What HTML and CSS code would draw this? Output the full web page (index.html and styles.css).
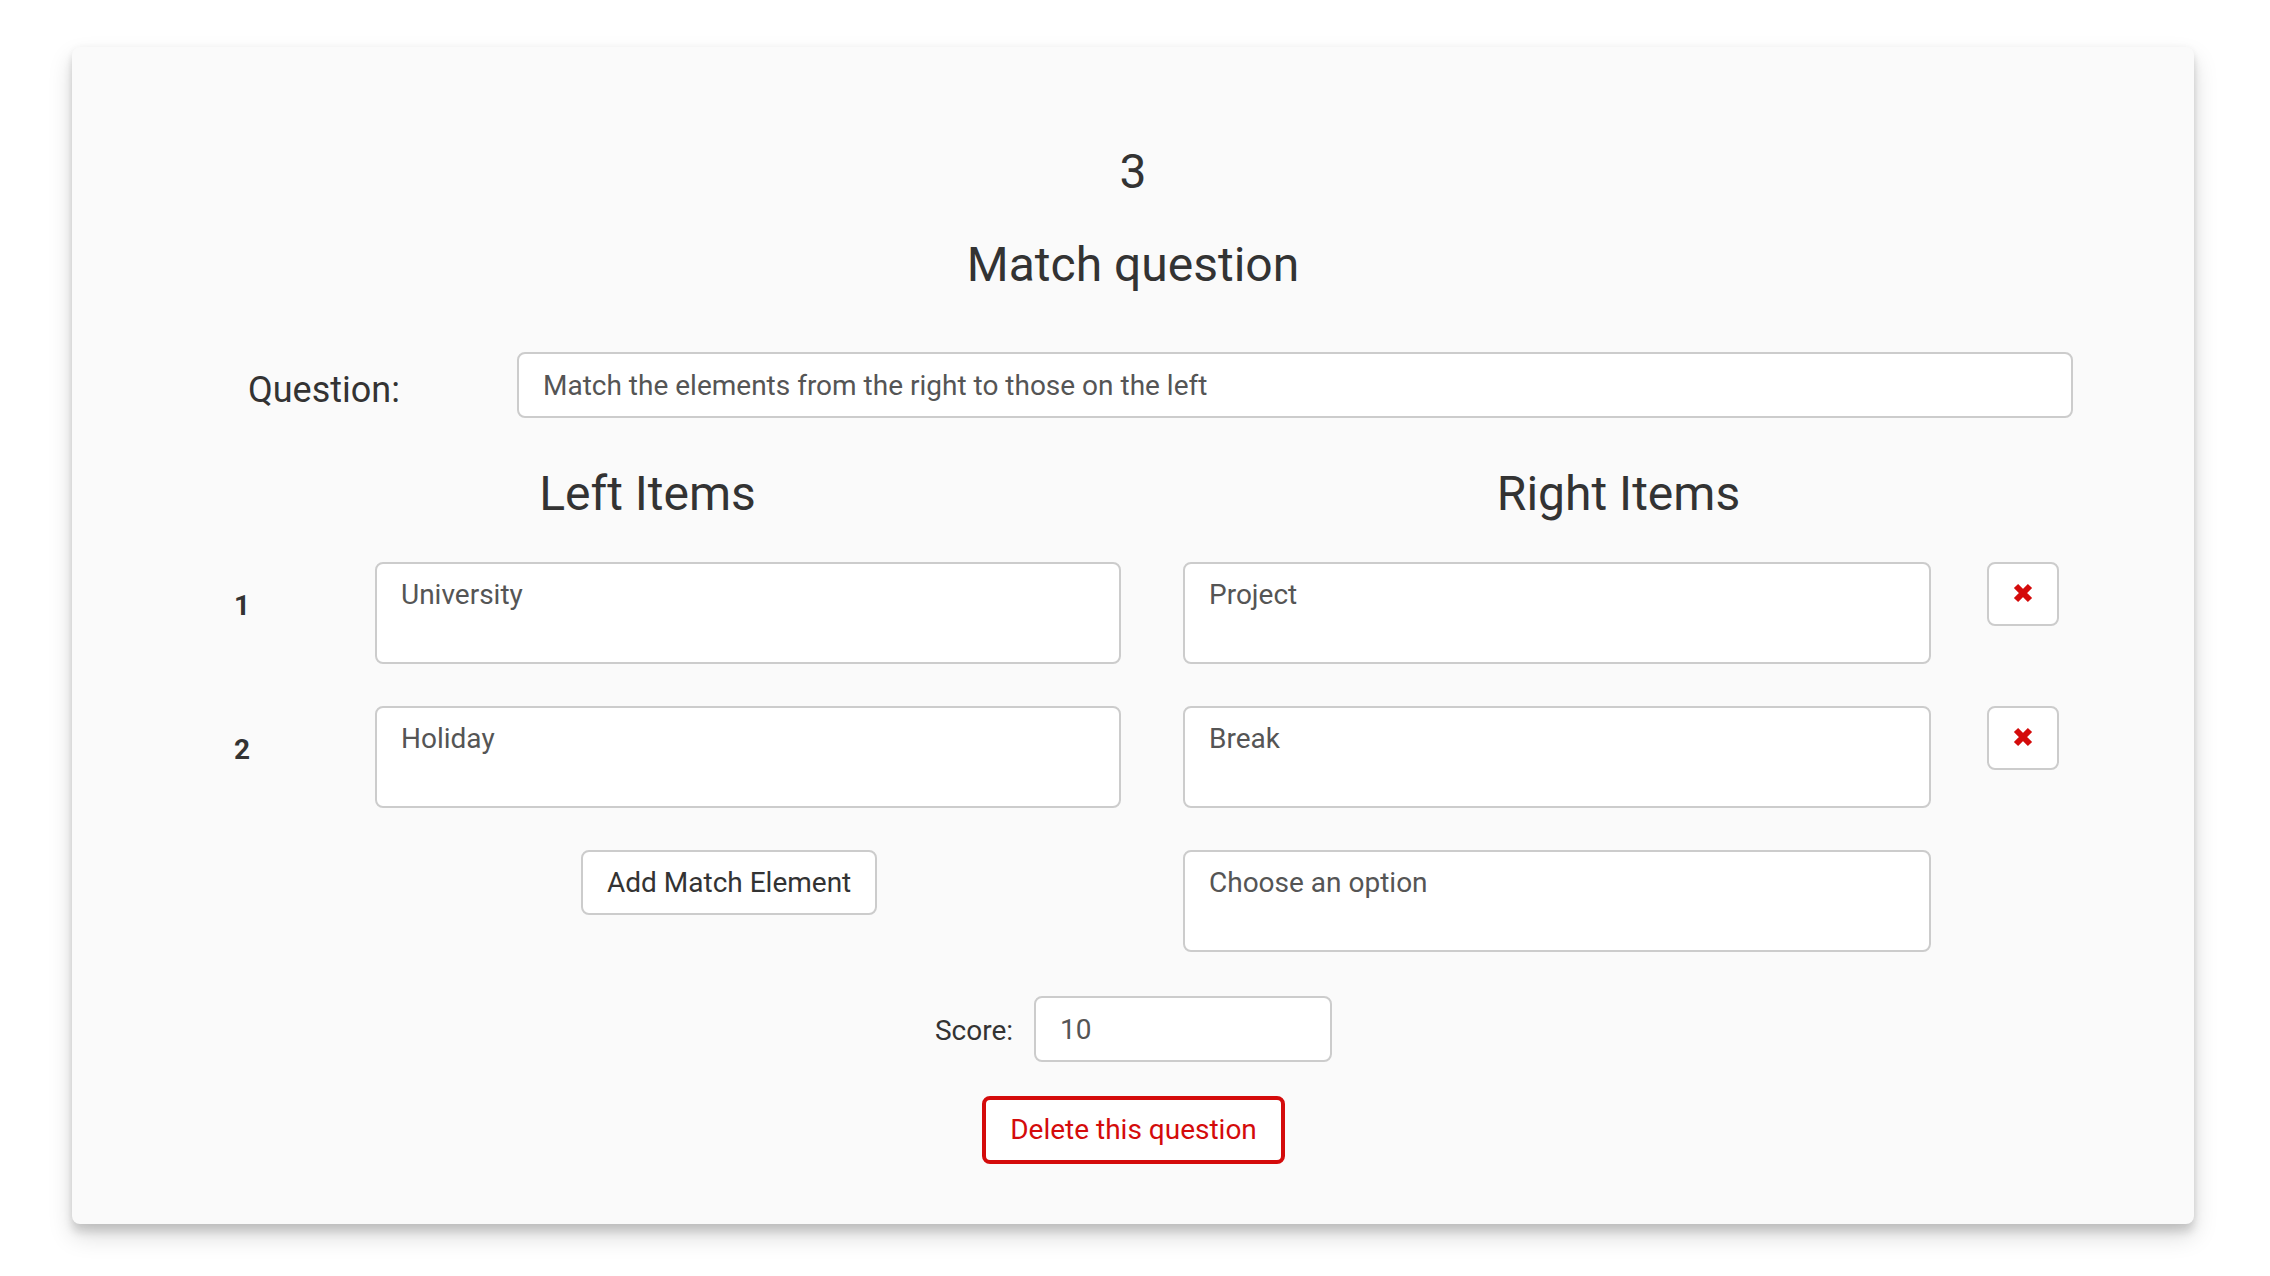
FILE: index.html
```html
<!DOCTYPE html>
<html lang="en">
<head>
<meta charset="utf-8">
<title>Match question</title>
<link rel="stylesheet" href="styles.css">
</head>
<body>
<div class="page">
<div class="card">
  <h3 class="title">3</h3>
  <h3 class="title title-second">Match question</h3>

  <div class="question-row">
    <label class="question-label">Question:</label>
    <input class="field question-input" type="text" value="Match the elements from the right to those on the left">
  </div>

  <div class="headers">
    <h3 class="col-head">Left Items</h3>
    <h3 class="col-head">Right Items</h3>
  </div>

  <div class="pairs">
    <div class="pair">
      <div class="num">1</div>
      <div class="field box left-box">University</div>
      <div class="field box right-box">Project</div>
      <button class="remove-btn" type="button" aria-label="Remove">
        <svg width="22" height="22" viewBox="0 0 22 22"><path d="M4 4 L18 18 M18 4 L4 18" stroke="#d40b0b" stroke-width="6" stroke-linecap="butt" fill="none"/></svg>
      </button>
    </div>
    <div class="pair">
      <div class="num">2</div>
      <div class="field box left-box">Holiday</div>
      <div class="field box right-box">Break</div>
      <button class="remove-btn" type="button" aria-label="Remove">
        <svg width="22" height="22" viewBox="0 0 22 22"><path d="M4 4 L18 18 M18 4 L4 18" stroke="#d40b0b" stroke-width="6" stroke-linecap="butt" fill="none"/></svg>
      </button>
    </div>
    <div class="pair">
      <div class="num"></div>
      <div class="add-cell"><button class="btn add-btn" type="button">Add Match Element</button></div>
      <div class="field box right-box">Choose an option</div>
    </div>
  </div>

  <div class="score-row">
    <label class="score-label">Score:</label>
    <input class="field score-input" type="text" value="10">
  </div>

  <div class="delete-row">
    <button class="btn delete-btn" type="button">Delete this question</button>
  </div>
</div>
</div>
</body>
</html>
```

FILE: styles.css
```css
html, body {
  margin: 0;
  padding: 0;
  background: #ffffff;
}

body {
  font-family: Roboto, "Liberation Sans", Arial, sans-serif;
  color: #333333;
}

.page {
  box-sizing: border-box;
  height: 1276px;
  padding: 47px 0 0 72px;
  overflow: hidden;
}

.card {
  width: 2122px;
  height: 1177px;
  box-sizing: border-box;
  padding: 97px 89px 0 90px;
  background: #fafafa;
  border-radius: 8px;
  box-shadow: 0 12px 24px rgba(0, 0, 0, 0.15), 0 8px 8px rgba(0, 0, 0, 0.13), 0 0 6px rgba(0, 0, 0, 0.04);
  display: flex;
  flex-direction: column;
}

.title {
  margin: 0;
  font-size: 48px;
  line-height: 56px;
  font-weight: 400;
  text-align: center;
  color: #333333;
  margin-left: -90px;
  margin-right: -89px;
}

.title-second {
  margin-top: 37px;
}

.field {
  box-sizing: border-box;
  background: #ffffff;
  border: 2px solid #cccccc;
  border-radius: 8px;
  font-family: Roboto, "Liberation Sans", Arial, sans-serif;
  font-size: 28px;
  line-height: 40px;
  color: #555555;
  padding: 11px 24px;
  margin: 0;
  outline: none;
}

.question-row {
  display: flex;
  align-items: flex-start;
  margin-top: 59px;
}

.question-label {
  box-sizing: border-box;
  width: 355px;
  padding-left: 86px;
  margin-top: 20px;
  font-size: 36px;
  line-height: 36px;
  color: #333333;
}

.question-input {
  width: 1556px;
  height: 66px;
}

.headers {
  display: flex;
  margin-top: 48px;
}

.col-head {
  margin: 0;
  width: 971px;
  text-align: center;
  font-size: 48px;
  line-height: 56px;
  font-weight: 400;
  color: #333333;
}

.pairs {
  display: flex;
  flex-direction: column;
  gap: 42px;
  margin-top: 40px;
}

.pair {
  display: flex;
  align-items: flex-start;
}

.num {
  box-sizing: border-box;
  width: 213px;
  padding-left: 72px;
  padding-top: 24px;
  font-size: 28px;
  line-height: 40px;
  font-weight: 700;
  color: #333333;
}

.box {
  height: 102px;
}

.left-box {
  width: 746px;
}

.add-cell {
  width: 746px;
  padding-left: 206px;
  box-sizing: border-box;
}

.right-box {
  width: 748px;
  margin-left: 62px;
}

.remove-btn {
  box-sizing: border-box;
  width: 72px;
  height: 64px;
  margin-left: 56px;
  background: #ffffff;
  border: 2px solid #cccccc;
  border-radius: 8px;
  padding: 0;
  display: flex;
  align-items: center;
  justify-content: center;
}

.remove-btn svg {
  display: block;
  margin-top: -2px;
}

.btn {
  box-sizing: border-box;
  font-family: Roboto, "Liberation Sans", Arial, sans-serif;
  font-size: 28px;
  line-height: 40px;
  background: #ffffff;
  border-radius: 8px;
  margin: 0;
  white-space: nowrap;
}

.add-btn {
  border: 2px solid #cccccc;
  color: #333333;
  padding: 10px 24px;
  height: 65px;
}

.score-row {
  display: flex;
  justify-content: center;
  align-items: center;
  gap: 21px;
  margin-top: 44px;
}

.score-label {
  font-size: 28px;
  line-height: 40px;
  color: #333333;
  margin-top: 3px;
}

.score-input {
  width: 298px;
  height: 66px;
}

.delete-row {
  display: flex;
  justify-content: center;
  margin-top: 34px;
}

.delete-btn {
  border: 4px solid #d40b0b;
  color: #d40b0b;
  padding: 10px 24px;
  height: 68px;
}
```
